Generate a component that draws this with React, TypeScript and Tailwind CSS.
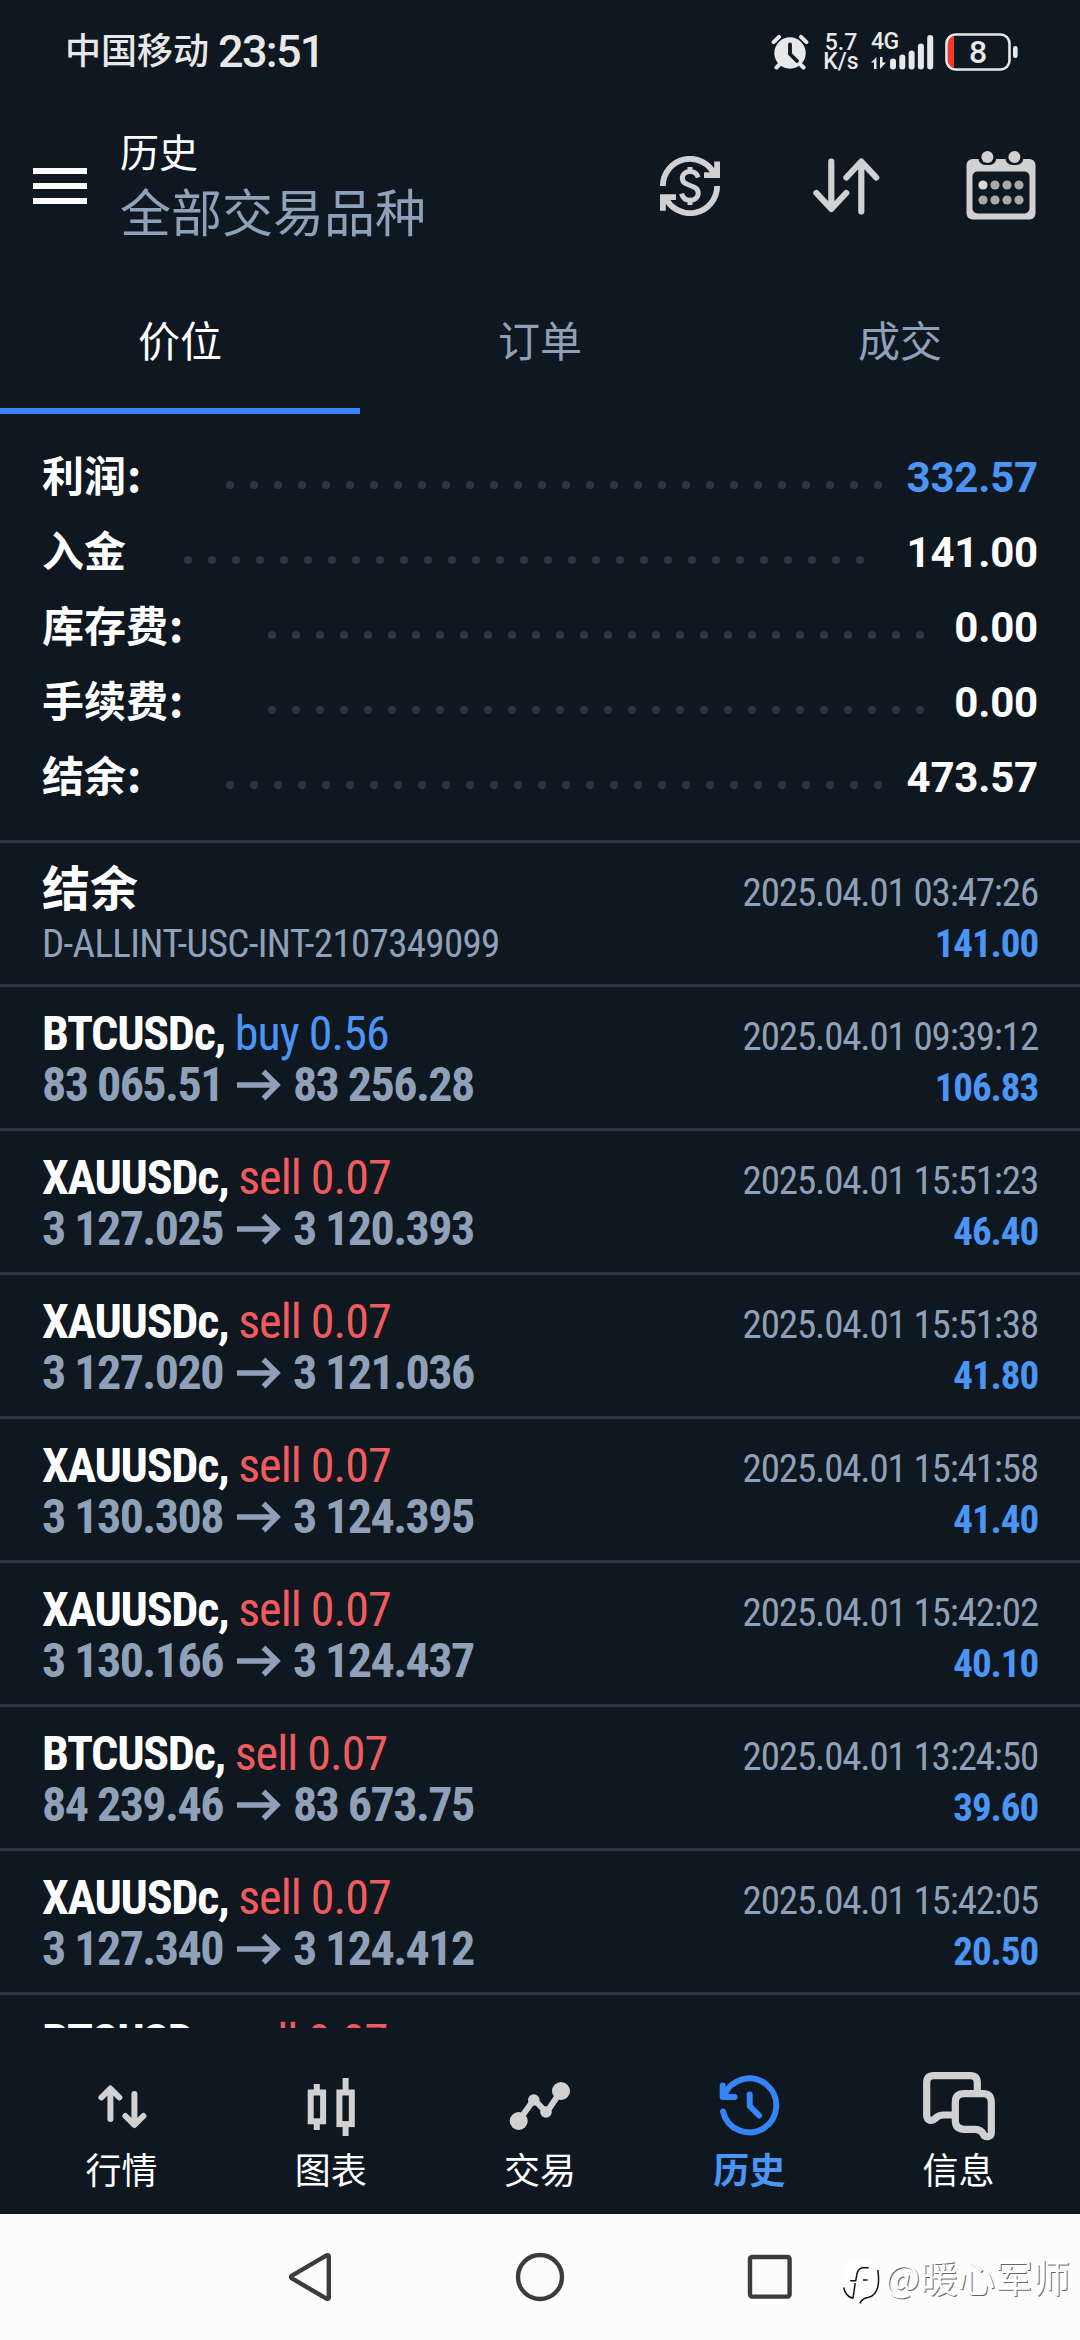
import React from "react";
import { clsx } from "clsx";

interface SummaryRow {
  label: string;
  value: string;
  dots: number;
  colon?: boolean;
  highlight?: boolean;
}

interface Deal {
  symbol: string;
  side: "buy" | "sell";
  volume: string;
  open: string;
  close: string;
  time: string;
  profit: string;
}

const tabs = ["价位", "订单", "成交"];

const summary: SummaryRow[] = [
  { label: "利润", value: "332.57", dots: 28, colon: true, highlight: true },
  { label: "入金", value: "141.00", dots: 29 },
  { label: "库存费", value: "0.00", dots: 28, colon: true },
  { label: "手续费", value: "0.00", dots: 28, colon: true },
  { label: "结余", value: "473.57", dots: 28, colon: true },
];

const deals: Deal[] = [
  { symbol: "BTCUSDc", side: "buy", volume: "0.56", open: "83 065.51", close: "83 256.28", time: "2025.04.01 09:39:12", profit: "106.83" },
  { symbol: "XAUUSDc", side: "sell", volume: "0.07", open: "3 127.025", close: "3 120.393", time: "2025.04.01 15:51:23", profit: "46.40" },
  { symbol: "XAUUSDc", side: "sell", volume: "0.07", open: "3 127.020", close: "3 121.036", time: "2025.04.01 15:51:38", profit: "41.80" },
  { symbol: "XAUUSDc", side: "sell", volume: "0.07", open: "3 130.308", close: "3 124.395", time: "2025.04.01 15:41:58", profit: "41.40" },
  { symbol: "XAUUSDc", side: "sell", volume: "0.07", open: "3 130.166", close: "3 124.437", time: "2025.04.01 15:42:02", profit: "40.10" },
  { symbol: "BTCUSDc", side: "sell", volume: "0.07", open: "84 239.46", close: "83 673.75", time: "2025.04.01 13:24:50", profit: "39.60" },
  { symbol: "XAUUSDc", side: "sell", volume: "0.07", open: "3 127.340", close: "3 124.412", time: "2025.04.01 15:42:05", profit: "20.50" },
];

/* ---------- status bar ---------- */

const AlarmIcon = () => (
  <svg width="38" height="38" viewBox="0 0 38 38" fill="none">
    <circle cx="19" cy="20" r="15.7" fill="#e8e8e8" />
    <path
      d="M2.6 9.2 8 3.8M35.4 9.2 30 3.8M5.5 34.5 9 31M32.5 34.5 29 31"
      stroke="#e8e8e8"
      strokeWidth="4"
      strokeLinecap="round"
    />
    <path d="M19 11.5V21L26 28" stroke="#0f1720" strokeWidth="3.8" strokeLinecap="round" />
  </svg>
);

const SignalIcon = () => (
  <svg width="64" height="38" viewBox="0 0 64 38" fill="#e8e8e8">
    <path d="M0 29.5 5.5 24V36H3V29.5ZM9 24H11.5V29.5H15L9 36Z" />
    <rect x="19" y="25.5" width="6" height="11" rx="3" />
    <rect x="28.3" y="21.5" width="6" height="15" rx="3" />
    <rect x="37.6" y="17.5" width="6" height="19" rx="3" />
    <rect x="46.9" y="10.5" width="6" height="26" rx="3" />
    <rect x="56.2" y="2" width="6" height="34.5" rx="3" />
  </svg>
);

const StatusBar = () => (
  <div className="flex h-[104px] items-center pl-[65px] pr-[61px] text-[#e8e8e8]">
    <span className="text-[36px] leading-[48px] font-medium">中国移动</span>
    <span className="ml-[9px] text-[45px] leading-[48px] font-[480] tracking-[-1.7px] font-stretch-90%">23:51</span>
    <div className="ml-auto flex items-center">
      <AlarmIcon />
      <div className="ml-4 flex w-8 flex-col items-center text-[23px] leading-[19px] font-medium">
        <span>5.7</span>
        <span>K/s</span>
      </div>
      <div className="relative ml-3.5 flex">
        <SignalIcon />
        <span className="absolute -top-px left-0 text-[23px] leading-[20px] font-medium tracking-[-0.5px] font-stretch-90%">
          4G
        </span>
      </div>
      <div className="relative ml-[10px] flex">
        <svg width="74" height="38" viewBox="0 0 74 38" fill="none">
          <path d="M9 3V35C5 35 3 32 3 29V9C3 6 5 3 9 3Z" fill="#f5382a" />
          <rect x="1.5" y="1.5" width="63" height="35" rx="9" stroke="#e8e8e8" strokeWidth="2.6" />
          <rect x="68" y="13" width="4.6" height="12" rx="2.3" fill="#e8e8e8" />
        </svg>
        <span className="absolute top-0 left-0 w-[66px] text-center text-[32px] leading-[38px] font-[480]">8</span>
      </div>
    </div>
  </div>
);

/* ---------- header ---------- */

const CurrencyIcon = () => (
  <svg width="60" height="60" viewBox="0 0 60 60" fill="none" stroke="#d1d1d1" strokeWidth="5.8">
    <path d="M2.9 30A27.1 27.1 0 0 1 54.8 19" />
    <path d="M57.1 5.5V19.1H44" />
    <path d="M57.1 30A27.1 27.1 0 0 1 5.2 41" />
    <path d="M2.9 54.7V41.1H16" />
    <path
      d="M38.2 21.5C37.2 18 34 15.6 30 15.6C25.6 15.6 22.3 18.2 22.3 22.2C22.3 31.5 38.2 27.5 38.2 37C38.2 41.4 34.6 44.2 30 44.2C25.5 44.2 22.6 41.6 21.6 37.6M30 11V16.5M30 43.5V49"
      strokeWidth="5"
    />
  </svg>
);

const SortIcon = () => (
  <svg
    width="68"
    height="60"
    viewBox="0 0 68 60"
    fill="none"
    stroke="#d1d1d1"
    strokeWidth="6.2"
    strokeLinecap="round"
    strokeLinejoin="round"
  >
    <path d="M19.3 5.5V52.5M4.4 37 19.3 53 34.2 37" />
    <path d="M49.3 55.5V6M34.4 21.5 49.3 5.5 64.2 21.5" />
  </svg>
);

const CalendarIcon = () => (
  <svg width="70" height="70" viewBox="0 0 70 70">
    <rect x="0.5" y="8" width="69" height="60.5" rx="6" fill="#d1d1d1" />
    <rect x="6.5" y="20.5" width="57" height="42" rx="5" fill="#0f1720" />
    <rect x="12.4" y="-3" width="18" height="17" rx="7" fill="#0f1720" />
    <rect x="39.4" y="-3" width="18" height="17" rx="7" fill="#0f1720" />
    <circle cx="21.4" cy="6" r="6" fill="#d1d1d1" />
    <circle cx="48.4" cy="6" r="6" fill="#d1d1d1" />
    {[34, 49].map((y) =>
      [17, 29, 41, 53].map((x) => (
        <circle
          key={`${x}-${y}`}
          cx={x}
          cy={y}
          r="4.6"
          fill={x === 17 && y === 34 ? "#d8d8d8" : "#a7a9ac"}
        />
      )),
    )}
  </svg>
);

const Header = () => (
  <header className="flex h-[164px] items-center pl-[33px] pr-11">
    <div className="flex w-[54px] flex-col gap-[9px]">
      <div className="h-1.5 bg-white" />
      <div className="h-1.5 bg-white" />
      <div className="h-1.5 bg-white" />
    </div>
    <div className="ml-[33px] pt-[7px]">
      <div className="text-[39px] leading-[50px] text-white">历史</div>
      <div className="text-[51px] leading-[72px] text-[#8fa1b8]">全部交易品种</div>
    </div>
    <div className="ml-auto flex items-center">
      <CurrencyIcon />
      <div className="ml-[92px]">
        <SortIcon />
      </div>
      <div className="ml-[86px]">
        <CalendarIcon />
      </div>
    </div>
  </header>
);

/* ---------- history ---------- */

const Tabs = () => (
  <nav className="grid h-[146px] grid-cols-3">
    {tabs.map((tab, i) => (
      <div
        key={tab}
        className={clsx(
          "flex items-center justify-center border-b-[6px] pt-[10px] text-[42px] leading-[56px]",
          i === 0 ? "border-[#3784f8] text-white" : "border-transparent text-[#8fa1b8]",
        )}
      >
        {tab}
      </div>
    ))}
  </nav>
);

const Summary = () => (
  <section className="px-[42px] pt-[26px] pb-[25px]">
    {summary.map((row) => (
      <div key={row.label} className="flex h-[75px] text-[42px] leading-[75px] font-bold">
        <span
          className={clsx(
            "shrink-0 text-white",
            !row.colon && "w-[142px]",
            row.colon && row.label.length === 2 && "w-[184px]",
            row.colon && row.label.length === 3 && "w-[226px]",
          )}
        >
          {row.label}
          {row.colon && (
            <span className="ml-px font-['Noto_Sans_CJK_SC',sans-serif] text-[44px] leading-none">:</span>
          )}
        </span>
        <div className="flex items-center gap-4 pt-[15px]">
          {Array.from({ length: row.dots }, (_, i) => (
            <i key={i} className="size-2 shrink-0 rounded-full bg-[#2b3543]" />
          ))}
        </div>
        <span
          className={clsx("ml-auto tracking-[-0.2px]", row.highlight ? "text-[#4b95f5]" : "text-white")}
        >
          {row.value}
        </span>
      </div>
    ))}
  </section>
);

const Arrow = () => (
  <svg width="44" height="32" viewBox="0 0 44 32" fill="none" stroke="#8fa1b8" strokeWidth="5.4">
    <path d="M0 16H40M26.5 2.5 40 16 26.5 29.5" />
  </svg>
);

const ListRow = ({ children }: { children: React.ReactNode }) => (
  <div className="h-36 shrink-0 border-t-[3px] border-[#2b3543] px-[42px] pt-[21px] font-['Roboto_Condensed','Roboto','Noto_Sans_CJK_SC',sans-serif] font-stretch-75%">
    {children}
  </div>
);

const RowLine = ({ left, right }: { left: React.ReactNode; right: React.ReactNode }) => (
  <div className="flex h-[51px] items-baseline justify-between text-[48px] leading-[51px]">
    {left}
    {right}
  </div>
);

const Time = ({ value }: { value: string }) => (
  <span className="text-[39px] tracking-[-1.15px] text-[#8fa1b8]">{value}</span>
);

const Profit = ({ value }: { value: string }) => (
  <span className="text-[39px] font-bold tracking-[-1.1px] text-[#4b95f5]">{value}</span>
);

const DealRow = ({ deal }: { deal: Deal }) => (
  <ListRow>
    <RowLine
      left={
        <div>
          <span className="font-bold tracking-[-1.3px] text-white">{deal.symbol}, </span>
          <span
            className={clsx(
              "tracking-[-0.95px]",
              deal.side === "buy" ? "text-[#4b95f5]" : "text-[#ee5c5e]",
            )}
          >
            {deal.side} {deal.volume}
          </span>
        </div>
      }
      right={<Time value={deal.time} />}
    />
    <RowLine
      left={
        <div className="flex items-center font-bold tracking-[-1.55px] text-[#8fa1b8]">
          <span>{deal.open}</span>
          <span className="mr-3 ml-[14px]">
            <Arrow />
          </span>
          <span>{deal.close}</span>
        </div>
      }
      right={<Profit value={deal.profit} />}
    />
  </ListRow>
);

const BalanceRow = () => (
  <ListRow>
    <RowLine
      left={<span className="font-bold text-white">结余</span>}
      right={<Time value="2025.04.01 03:47:26" />}
    />
    <RowLine
      left={
        <div>
          <span className="text-[39px] tracking-[-0.67px] text-[#8fa1b8]">D-ALLINT-USC-INT-2107349099</span>
        </div>
      }
      right={<Profit value="141.00" />}
    />
  </ListRow>
);

/* ---------- bottom navigation ---------- */

const QuotesIcon = () => (
  <svg width="72" height="72" viewBox="0 0 72 72" fill="none" stroke="#d1d1d1" strokeWidth="6" strokeLinecap="round" strokeLinejoin="round">
    <path d="M24.4 49V19M15.4 27.5 24.4 18.5 33.4 27.5" />
    <path d="M48.4 24V54M39.4 46 48.4 55 57.4 46" />
  </svg>
);

const ChartIcon = () => (
  <svg width="72" height="72" viewBox="0 0 72 72" fill="none" stroke="#d1d1d1" strokeWidth="6">
    <path d="M21.8 14V20.5M21.8 54V60M50.6 8V20.5M50.6 56.5V66" />
    <rect x="15.7" y="22.5" width="12.4" height="28.8" />
    <rect x="44.4" y="22.5" width="12.4" height="31.6" />
  </svg>
);

const TradeIcon = () => (
  <svg width="72" height="72" viewBox="0 0 72 72" fill="#d1d1d1">
    <path d="M14.5 51 30 29.5 42.5 42.5 57 21" fill="none" stroke="#d1d1d1" strokeWidth="6" strokeLinejoin="round" />
    <circle cx="14.7" cy="51" r="9" />
    <circle cx="29.8" cy="30" r="5.8" />
    <circle cx="42" cy="42" r="5.8" />
    <circle cx="57" cy="21" r="9" />
  </svg>
);

const HistoryIcon = () => (
  <svg width="72" height="72" viewBox="0 0 72 72" fill="none" stroke="#3784f8" strokeWidth="6" strokeLinecap="round" strokeLinejoin="round">
    <path d="M10 41.5A27 27 0 1 0 11 26" />
    <path d="M9.7 15.5V27H21.5M36.7 24.5V36L46 45.5" />
  </svg>
);

const MessagesIcon = () => (
  <svg width="80" height="80" viewBox="0 2 80 80" fill="none" stroke="#d1d1d1" strokeWidth="7.2" strokeLinejoin="round">
    <path d="M59.3 28V18.5C59.3 14 57 11.6 52.5 11.6H15.5C11 11.6 8.7 14 8.7 18.5V51C8.7 56.8 14 58 17.5 54.2C20 51.8 22 51 25.5 51H35" />
    <path d="M46.5 29.7H64.5C70.5 29.7 73.3 32.5 73.3 38.5V69C73.3 73.4 66.8 73.8 65.2 70C63.6 66.6 61.5 65.3 57.5 65.3H46.5C40.3 65.3 37.3 62.3 37.3 56.3V38.5C37.3 32.5 40.3 29.7 46.5 29.7Z" />
  </svg>
);

const navItems = [
  { name: "行情", icon: QuotesIcon },
  { name: "图表", icon: ChartIcon },
  { name: "交易", icon: TradeIcon },
  { name: "历史", icon: HistoryIcon, active: true },
  { name: "信息", icon: MessagesIcon },
];

const BottomNav = () => (
  <nav className="grid h-[186px] shrink-0 grid-cols-5 px-[17px] pt-[42px]">
    {navItems.map((item) => (
      <div key={item.name} className="flex flex-col items-center">
        <div className="flex h-[72px] items-center justify-center">
          <item.icon />
        </div>
        <span
          className={clsx(
            "mt-[6px] text-[36px] leading-[48px]",
            item.active ? "font-bold text-[#4b95f5]" : "text-white",
          )}
        >
          {item.name}
        </span>
      </div>
    ))}
  </nav>
);

const SystemBar = () => (
  <div className="relative flex h-[126px] shrink-0 items-center justify-center gap-[181px] bg-[#fcfcfc]">
    <svg width="48" height="52" viewBox="0 0 48 52" fill="none" stroke="#3c3c3c" strokeWidth="4.4" strokeLinejoin="round">
      <path d="M5.5 24.8C4.8 25.4 4.8 26.6 5.5 27.2L40.5 47.6C41.6 48.2 42.8 47.6 42.8 46.4V5.6C42.8 4.4 41.6 3.8 40.5 4.4Z" />
    </svg>
    <svg width="50" height="52" viewBox="0 0 50 52" fill="none" stroke="#3c3c3c" strokeWidth="4.4">
      <circle cx="25" cy="26" r="22" />
    </svg>
    <svg width="48" height="52" viewBox="0 0 48 52" fill="none" stroke="#3c3c3c" strokeWidth="4.4">
      <rect x="4" y="6" width="39.6" height="39.6" rx="2" />
    </svg>
    <div className="absolute top-[40px] right-[10px] flex items-start">
      <svg width="40" height="52" viewBox="0 -2 40 52" fill="none">
        <path d="M10 5H28Q37 6 37 16V30Q35 41 24 42L18.5 47L14 42.5Q1 41 1 28V16Q1 6 10 5Z" fill="#fff" />
        <path
          d="M9.3 24.7H14.7L16 17.8Q17.5 12 22 11.8H27.7M22 24H26.7M14.2 27 12 42.3M2.7 31.5Q4.5 40.5 12 42.3M36.8 14Q38.5 25 36.5 32Q34 40 27 41.6Q22 42 18.7 47.3"
          stroke="#111"
          strokeWidth="1.5"
        />
      </svg>
      <span className="ml-1 font-['Noto_Sans_CJK_SC',sans-serif] text-[37.5px] leading-[44px] text-white [text-shadow:1px_1px_0_#666]">
        @暖心军师
      </span>
    </div>
  </div>
);

export default function App() {
  return (
    <div className="flex h-[2340px] w-[1080px] flex-col overflow-hidden bg-[#0f1720] font-['Roboto','Noto_Sans_CJK_SC',sans-serif]">
      <StatusBar />
      <Header />
      <Tabs />
      <Summary />
      <main className="flex min-h-0 flex-1 flex-col overflow-hidden">
        <BalanceRow />
        {deals.map((deal) => (
          <DealRow key={deal.time} deal={deal} />
        ))}
        <DealRow
          deal={{ symbol: "BTCUSDc", side: "sell", volume: "0.07", open: "", close: "", time: "", profit: "" }}
        />
      </main>
      <BottomNav />
      <SystemBar />
    </div>
  );
}
